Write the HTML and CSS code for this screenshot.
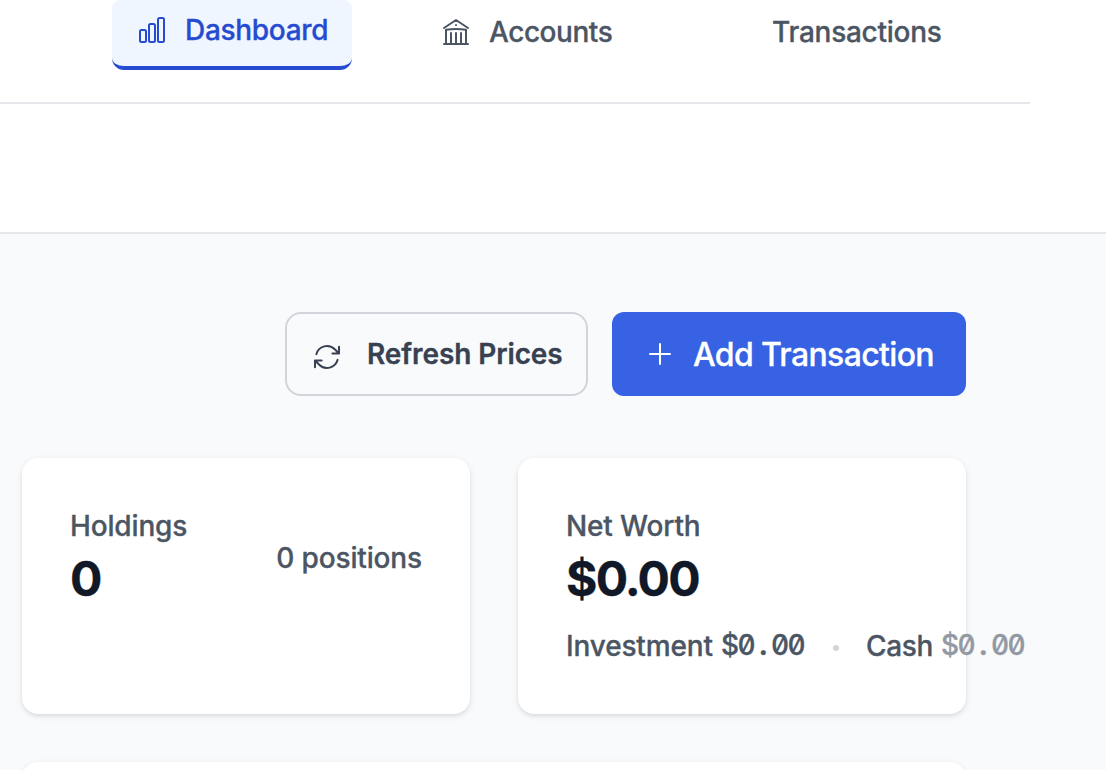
FILE: index.html
```html
<!DOCTYPE html>
<html lang="en">
<head>
<meta charset="utf-8">
<title>Dashboard</title>
<link rel="stylesheet" href="styles.css">
</head>
<body>
<header class="header">
  <nav class="nav">
    <a class="tab tab-active">
      <svg class="icon" viewBox="0 0 24 24"><path d="M3 13.125C3 12.504 3.504 12 4.125 12h2.25c.621 0 1.125.504 1.125 1.125v6.75C7.5 20.496 6.996 21 6.375 21h-2.25A1.125 1.125 0 0 1 3 19.875v-6.75ZM9.75 8.625c0-.621.504-1.125 1.125-1.125h2.25c.621 0 1.125.504 1.125 1.125v11.25c0 .621-.504 1.125-1.125 1.125h-2.25a1.125 1.125 0 0 1-1.125-1.125V8.625ZM16.5 4.125c0-.621.504-1.125 1.125-1.125h2.25C20.496 3 21 3.504 21 4.125v15.75c0 .621-.504 1.125-1.125 1.125h-2.25a1.125 1.125 0 0 1-1.125-1.125V4.125Z"/></svg>
      <span class="label label-dashboard">Dashboard</span>
    </a>
    <a class="tab tab-accounts">
      <svg class="icon" viewBox="0 0 24 24"><path d="M12 21v-8.25M15.75 21v-8.25M8.25 21v-8.25M3 9l9-6 9 6m-1.500 12V10.332A48.360 48.360 0 0 0 12 9.750c-2.551 0-5.056.2-7.500.582V21M3 21h18M12 6.750h.008v.008H12V6.750Z"/></svg>
      <span class="label label-accounts">Accounts</span>
    </a>
    <a class="tab tab-transactions"><span class="label label-transactions">Transactions</span></a>
  </nav>
</header>
<main class="main">
  <div class="actions">
    <button class="button button-refresh">
      <svg class="icon" viewBox="0 0 24 24"><path d="M16.023 9.348h4.992v-.001M2.985 19.644v-4.992m0 0h4.992m-4.993 0 3.181 3.183a8.250 8.250 0 0 0 13.803-3.700M4.031 9.865a8.250 8.250 0 0 1 13.803-3.700l3.181 3.182m0-4.991v4.990"/></svg>
      <span class="label label-refresh">Refresh Prices</span>
    </button>
    <button class="button button-add">
      <svg class="icon icon-plus" viewBox="0 0 24 24"><path d="M12 4.500v15m7.500-7.500h-15"/></svg>
      <span class="label label-add">Add Transaction</span>
    </button>
  </div>
  <div class="cards">
    <section class="card card-holdings">
      <div>
        <div class="title"><span class="label label-holdings">Holdings</span></div>
        <div class="value"><span class="label label-count">0</span></div>
      </div>
      <div class="positions"><span class="label label-positions">0 positions</span></div>
    </section>
    <section class="card">
      <div class="title"><span class="label label-worth">Net Worth</span></div>
      <div class="value"><span class="label label-amount">$0.00</span></div>
      <div class="breakdown">
        <span class="label label-investment">Investment</span>
        <span class="mono">$0<span class="point">.</span>00</span>
        <span class="dot"></span>
        <span class="label label-cash">Cash</span>
        <span class="mono mono-muted">$0<span class="point">.</span>00</span>
      </div>
    </section>
  </div>
  <section class="panel"></section>
</main>
</body>
</html>
```
FILE: styles.css
```css
* { box-sizing: border-box; }
body {
  margin: 0;
  width: 1106px;
  height: 770px;
  overflow: hidden;
  background: #f9fafb;
  color: #4b5563;
  font-family: Inter, "Liberation Sans", sans-serif;
  font-size: 28px;
  font-weight: 500;
  letter-spacing: -.15px;
  line-height: 40px;
  -webkit-text-stroke: .3px currentColor;
}
.header { height: 234px; background: #fff; border-bottom: 2px solid #e5e7eb; }
.nav {
  display: flex;
  align-items: flex-start;
  width: 1030px;
  height: 104px;
  padding-left: 112px;
  border-bottom: 2px solid #e5e7eb;
}
.tab { display: flex; align-items: center; gap: 16px; height: 64px; }
.tab-active {
  width: 240px;
  height: 70px;
  padding: 0 0 6px 24px;
  color: #264bd0;
  background: #eff6ff;
  border-bottom: 4px solid #264bd0;
  border-radius: 8px 8px 12px 12px;
}
.tab-accounts { width: 185px; margin-left: 88px; }
.tab-transactions { margin-left: 147px; }
.icon {
  flex: none;
  width: 32px;
  height: 32px;
  fill: none;
  stroke: currentColor;
  stroke-width: 1.5;
  stroke-linecap: round;
  stroke-linejoin: round;
}
.label { white-space: nowrap; }
.label-dashboard { letter-spacing: -.3px; padding-left: 1px; }
.label-accounts { letter-spacing: -.45px; padding-left: 1px; }
.label-transactions { letter-spacing: -.25px; }
.main { height: 536px; padding: 78px 140px 0 22px; overflow: hidden; }
.actions { display: flex; justify-content: flex-end; gap: 24px; }
.button {
  display: flex;
  align-items: center;
  height: 84px;
  border-radius: 12px;
  font: inherit;
}
.button-refresh {
  width: 303px;
  padding: 0 0 0 24px;
  gap: 24px;
  color: #374151;
  background: #f9fafb;
  border: 2px solid #d1d5db;
  border-radius: 16px;
  font-weight: 600;
  letter-spacing: -.1px;
}
.button-refresh .icon { margin-top: 5px; }
.button-add {
  width: 354px;
  padding: 2px 0 0 32px;
  gap: 17px;
  color: #fff;
  background: #3662e3;
  border: 0;
  font-size: 32px;
  letter-spacing: -.65px;
}
.button-add .icon { margin-top: -2px; }
.cards { display: flex; gap: 48px; margin-top: 62px; }
.card {
  flex: none;
  width: 448px;
  height: 256px;
  padding: 48px;
  background: #fff;
  border-radius: 16px;
  box-shadow: 0 2px 6px rgba(0, 0, 0, .1), 0 2px 4px -2px rgba(0, 0, 0, .1);
}
.card-holdings { display: flex; justify-content: space-between; }
.title { height: 40px; }
.value {
  height: 64px;
  color: #111827;
  font-size: 48px;
  font-weight: 680;
  letter-spacing: -1.800px;
  line-height: 66px;
}
.positions { padding-top: 32px; }
.breakdown { display: flex; align-items: center; height: 40px; margin-top: 16px; }
.breakdown .label-investment { width: 146px; }
.breakdown .label-cash { width: 66px; }
.label-cash { letter-spacing: -.35px; }
.mono {
  flex: none;
  display: block;
  width: 84px;
  margin: -2px 0 0 9px;
  font-size: 28px;
  font-weight: 500;
  letter-spacing: -1.600px;
  white-space: nowrap;
  font-feature-settings: "tnum", "zero";
}
.mono-muted { color: #9299a3; }
.point { display: inline-block; width: 17px; text-align: center; font-weight: 700; }
.dot { flex: none; width: 6px; height: 6px; margin: 4px 27px 0 28px; border-radius: 50%; background: #d1d5db; }
.panel {
  height: 200px;
  width: 944px;
  margin-top: 48px;
  background: #fff;
  border-radius: 16px;
  box-shadow: 0 2px 6px rgba(0, 0, 0, .1);
}
```
